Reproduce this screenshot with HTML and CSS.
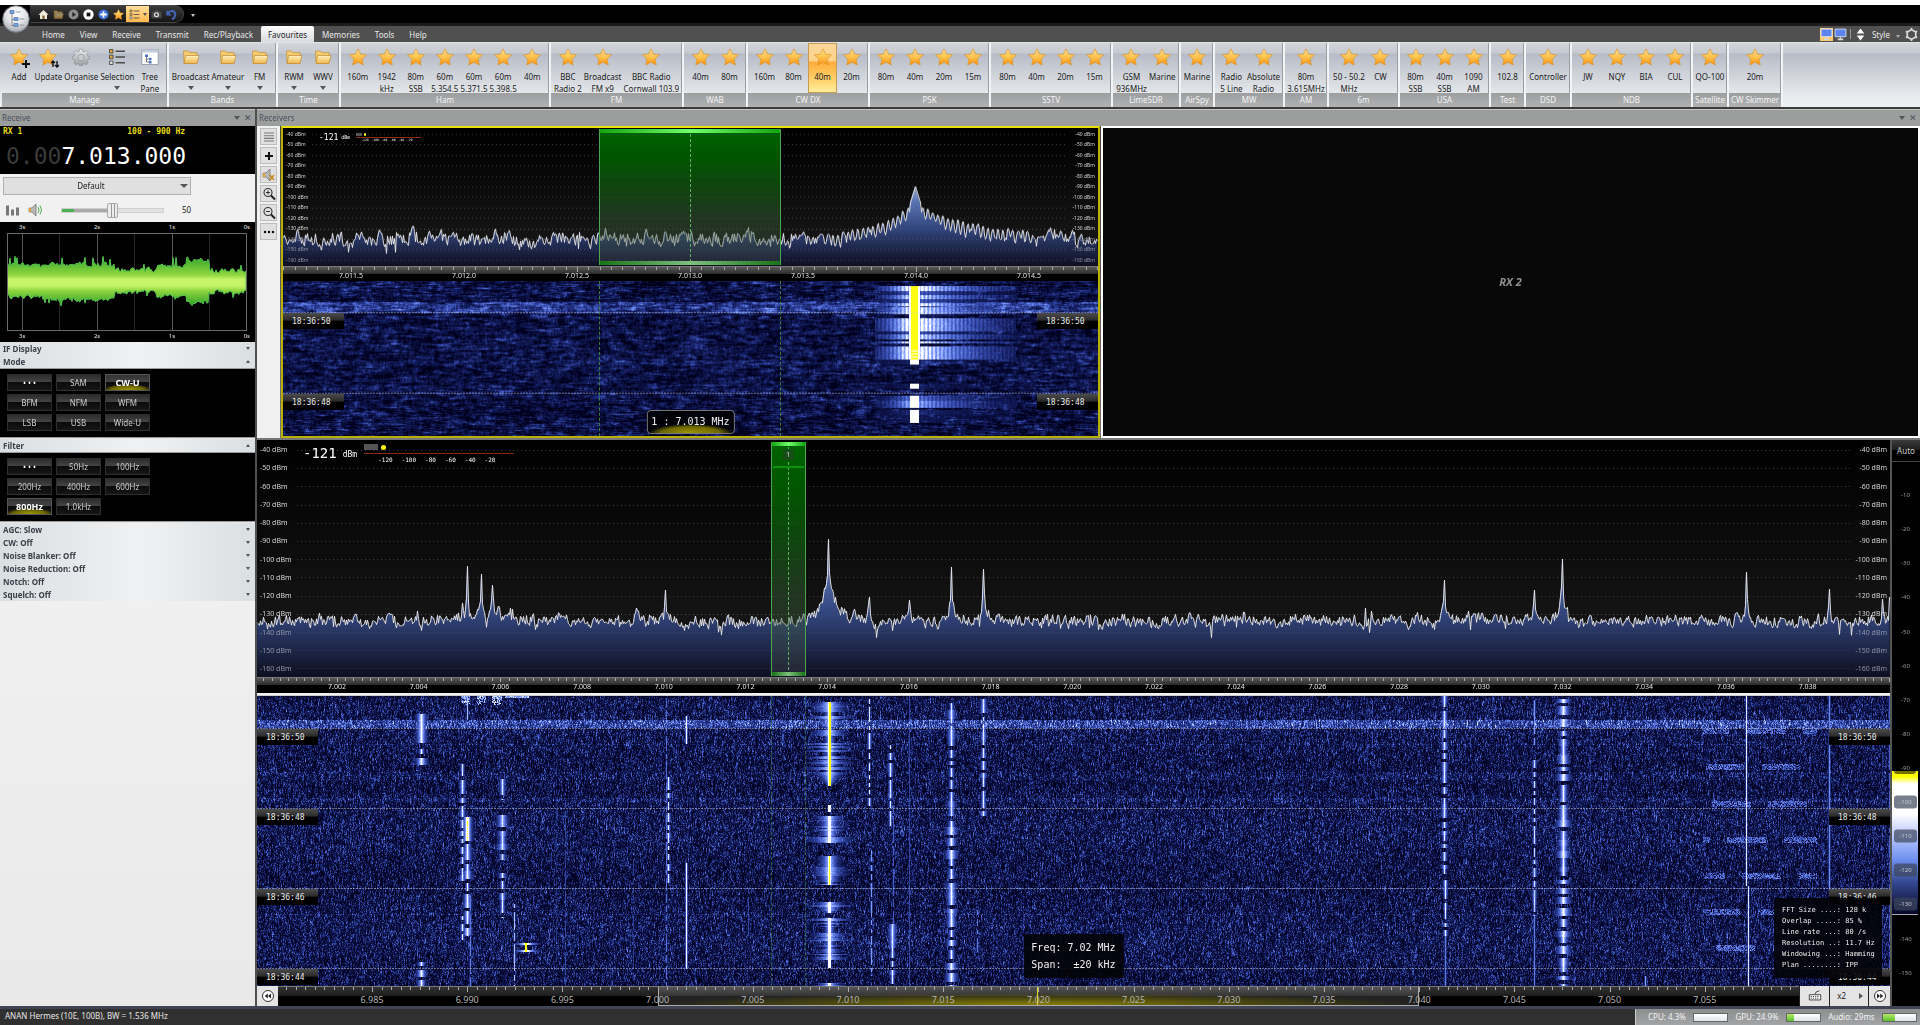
FILE: index.html
```html
<!DOCTYPE html>
<html lang="en">
<head>
<meta charset="utf-8">
<title>Receiver console</title>
<link rel="stylesheet" href="styles.css">
</head>
<body>
<svg class="defs" aria-hidden="true">
  <defs>
    <linearGradient id="gStar" x1="0" y1="0" x2="0" y2="1"><stop offset="0" stop-color="#ffdf95"/><stop offset=".5" stop-color="#ffc34f"/><stop offset="1" stop-color="#f79412"/></linearGradient>
    <linearGradient id="gFold" x1="0" y1="0" x2="0" y2="1"><stop offset="0" stop-color="#fff0bd"/><stop offset="1" stop-color="#f0b64c"/></linearGradient>
    <radialGradient id="gOrb" cx=".5" cy=".3" r=".8"><stop offset="0" stop-color="#fff"/><stop offset=".5" stop-color="#dfe1e4"/><stop offset="1" stop-color="#8d9197"/></radialGradient>
    <linearGradient id="gGear" x1="0" y1="0" x2="0" y2="1"><stop offset="0" stop-color="#e8e8e8"/><stop offset="1" stop-color="#9b9da0"/></linearGradient>
    <symbol id="star" viewBox="0 0 18 18"><path d="M9 .8l2.6 5.3 5.9.8-4.3 4.1 1 6-5.2-2.8L3.8 17l1-6L.5 6.900l5.9-.8z" fill="url(#gStar)" stroke="#d98c24" stroke-width=".6" stroke-linejoin="round"/></symbol>
    <symbol id="folder" viewBox="0 0 18 18"><path d="M1.500 3h5l1.500 1.600h7V15h-13z" fill="#f5cc70" stroke="#c08a30" stroke-width=".7"/><path d="M3.600 7.500H17L15 15.500H2z" fill="url(#gFold)" stroke="#c08a30" stroke-width=".7"/></symbol>
    <symbol id="gear" viewBox="0 0 18 18"><path d="M7.600 1h2.800l.5 2.200 1.300.6L14.200 2.600l2 2-1.200 2 .6 1.300 2 .6v2.600l-2.100.6-.6 1.300 1.200 2-2 2-2-1.200-1.300.6-.4 1.400H7.600l-.5-1.600-1.300-.5-2 1.200-2-2 1.200-2-.6-1.300L.4 11V8.400l2-.5.6-1.300-1.200-2 2-2 2 1.200 1.300-.6z" fill="url(#gGear)" stroke="#8a8c8f" stroke-width=".6"/><circle cx="9" cy="9.500" r="3.200" fill="#c9ccd2" stroke="#8a8c8f" stroke-width=".6"/></symbol>
    <symbol id="list" viewBox="0 0 18 18"><g fill="#e5a53a" stroke="#4a4a4a" stroke-width=".9"><path d="M1.500 1.500h3.500v3.500h-3.500zM1.500 7.200h3.500v3.500h-3.500z"/><path fill="#ddd" d="M1.500 13h3.500v3.500h-3.500z"/></g><path d="M7.500 3.300h9.500M7.500 9h9.500M7.500 14.800h9.500" stroke="#4a4a4a" stroke-width="1.400"/></symbol>
    <symbol id="tree" viewBox="0 0 18 18"><path d="M.8 1.500h16.400v15H.8z" fill="#fff" stroke="#8a93a3" stroke-width=".8"/><path d="M.8 1.500h16.400v3H.8z" fill="#c3ccdb"/><path d="M5.500 8v6M5.500 11h3M5.500 14h3" stroke="#556" stroke-width=".8"/><path d="M4 6.500h3v2.500h-3zM8 9.700h2.500v2.500h-2.500zM8 13h2.500v2.500h-2.500z" fill="#4a76c4"/></symbol>
    <symbol id="home" viewBox="0 0 10 10"><path d="M5 .8L.4 5.200h1.400v4h6.400v-4h1.400z" fill="#f3ecd8"/><path d="M4 6h2v3.200H4z" fill="#7a5a32"/></symbol>
    <symbol id="speaker" viewBox="0 0 14 14"><path d="M1 5h3l4-4v12l-4-4H1z" fill="#b9b9b9" stroke="#6a6a6a" stroke-width=".7"/><path d="M1 5h2v4H1z" fill="#e2a13a"/></symbol>
    <symbol id="lens" viewBox="0 0 14 14"><circle cx="6" cy="5.500" r="4" fill="none" stroke="#333" stroke-width="1.100"/><path d="M9 8.500l4 4" stroke="#222" stroke-width="2"/><path d="M4 5.500h4" stroke="#333" stroke-width="1"/></symbol>
    <symbol id="screen" viewBox="0 0 12 12"><path d="M1 1h10v7H1z" fill="#5c83ee" stroke="#dfe6fa" stroke-width=".8"/><path d="M3.500 10.500h5M6 8.500v2" stroke="#d8d8d8" stroke-width="1.400"/></symbol>
    <symbol id="skip" viewBox="0 0 14 14"><circle cx="7" cy="7" r="5.500" fill="#fff" stroke="#333" stroke-width="1"/><path d="M4 4.500L7 7 4 9.500zM7.200 4.500l3 2.500-3 2.500z" fill="#222"/></symbol>
  </defs>
</svg>

<header>
  <div class="titlebar">
    <svg class="orb" viewBox="0 0 28 28"><circle cx="14" cy="14" r="13.300" fill="url(#gOrb)" stroke="#70757c"/><path d="M10 8v13M10 14.500h4M10 20.500h4" stroke="#777" stroke-width=".8" fill="none"/><g fill="#7aa2dd" stroke="#3d66a8" stroke-width=".6"><path d="M8 5.500h4v3H8zM12 12.500h4v3h-4zM12 18.500h4v3h-4z"/></g><path d="M13.500 7h5M17.500 14h5M17.500 20h4" stroke="#8a8f97" stroke-width=".9"/></svg>
    <div class="qat">
      <button aria-label="Home"><svg><use href="#home"/></svg></button>
      <button aria-label="Open" class="dim"><svg><use href="#folder"/></svg></button>
      <button aria-label="Play"><svg viewBox="0 0 10 10"><circle cx="5" cy="5" r="4.500" fill="#8d8d8d"/><path d="M4 2.800L7.200 5 4 7.200z" fill="#222"/></svg></button>
      <button aria-label="Stop"><svg viewBox="0 0 10 10"><circle cx="5" cy="5" r="4.700" fill="#fff"/><path d="M3.300 3.300h3.400v3.400H3.300z" fill="#111"/></svg></button>
      <button aria-label="Add"><svg viewBox="0 0 10 10"><circle cx="5" cy="5" r="4.600" fill="#3c6fd6"/><path d="M5 2v6M2 5h6" stroke="#fff" stroke-width="1.600"/></svg></button>
      <button aria-label="Favourites"><svg><use href="#star"/></svg></button>
      <button aria-label="List" class="on"><svg><use href="#list"/></svg><i class="tri"></i></button>
      <button aria-label="Camera"><svg viewBox="0 0 10 10"><path d="M.5 2.500h2.500l1-1.200h3l.8 1.200h1.700v6H.5z" fill="#4a4a4a"/><circle cx="5" cy="5.300" r="2.300" fill="#ddd"/><circle cx="5" cy="5.300" r="1.100" fill="#333"/></svg></button>
      <button aria-label="Undo"><svg viewBox="0 0 10 10"><path d="M1.800 3.800C4 .5 8.500 1.500 8.300 5.500 8.200 7.500 7 8.700 5.500 9.500" fill="none" stroke="#4365b5" stroke-width="1.900"/><path d="M.3.8v5h5z" fill="#4365b5"/></svg></button>
    </div>
    <button class="more" aria-label="Customise"><i class="tri"></i></button>
  </div>
  <nav class="tabs">
    <a href="#">Home</a><a href="#">View</a><a href="#">Receive</a><a href="#">Transmit</a><a href="#">Rec/Playback</a><a href="#" class="active">Favourites</a><a href="#">Memories</a><a href="#">Tools</a><a href="#">Help</a>
    <div class="tabtools">
      <button class="lit" aria-label="Single display"><svg><use href="#screen"/></svg></button>
      <button aria-label="Display"><svg><use href="#screen"/></svg></button>
      <i class="bar"></i>
      <button aria-label="Resize"><svg viewBox="0 0 12 12"><path d="M6 .5l3.500 4.500h-7zM6 11.500l3.500-4.500h-7z" fill="#fff"/></svg></button>
      <button class="style">Style <i class="tri"></i></button>
      <button aria-label="Settings"><svg viewBox="0 0 12 12"><path d="M6 1.500l3.900 2.200v4.600L6 10.500 2.100 8.300V3.700z" fill="none" stroke="#ddd" stroke-width="1.500"/><path d="M6 0v2M6 10v2M.8 3l1.700 1M9.500 8l1.700 1M.8 9l1.700-1M9.500 4l1.700-1" stroke="#ddd" stroke-width="1.500"/></svg></button>
    </div>
  </nav>
  <div class="ribbon">
    <section><div class="tools">
      <button><span class="ico"><svg><use href="#star"/></svg><svg class="badge" viewBox="0 0 8 8"><path d="M4 0v8M0 4h8" stroke="#111" stroke-width="2"/></svg></span>Add</button>
      <button><span class="ico"><svg><use href="#star"/></svg><svg class="badge" viewBox="0 0 8 8"><path d="M2 7V2M0 3l2-2 2 2M6 1v5M4 5l2 2 2-2" stroke="#111" stroke-width="1.400" fill="none"/></svg></span>Update</button>
      <button><svg><use href="#gear"/></svg>Organise</button>
      <button><svg><use href="#list"/></svg>Selection<i class="tri"></i></button>
      <button><svg><use href="#tree"/></svg>Tree<br>Pane</button>
    </div><h2>Manage</h2></section>
    <section><div class="tools">
      <button><svg><use href="#folder"/></svg>Broadcast<i class="tri"></i></button>
      <button><svg><use href="#folder"/></svg>Amateur<i class="tri"></i></button>
      <button><svg><use href="#folder"/></svg>FM<i class="tri"></i></button>
    </div><h2>Bands</h2></section>
    <section><div class="tools">
      <button><svg><use href="#folder"/></svg>RWM<i class="tri"></i></button>
      <button><svg><use href="#folder"/></svg>WWV<i class="tri"></i></button>
    </div><h2>Time</h2></section>
    <section><div class="tools">
      <button><svg><use href="#star"/></svg>160m</button>
      <button><svg><use href="#star"/></svg>1942<br>kHz</button>
      <button><svg><use href="#star"/></svg>80m<br>SSB</button>
      <button><svg><use href="#star"/></svg>60m<br>5.354.5</button>
      <button><svg><use href="#star"/></svg>60m<br>5.371.5</button>
      <button><svg><use href="#star"/></svg>60m<br>5.398.5</button>
      <button><svg><use href="#star"/></svg>40m</button>
    </div><h2>Ham</h2></section>
    <section><div class="tools">
      <button><svg><use href="#star"/></svg>BBC<br>Radio 2</button>
      <button><svg><use href="#star"/></svg>Broadcast<br>FM x9</button>
      <button><svg><use href="#star"/></svg>BBC Radio<br>Cornwall 103.9</button>
    </div><h2>FM</h2></section>
    <section><div class="tools">
      <button><svg><use href="#star"/></svg>40m</button>
      <button><svg><use href="#star"/></svg>80m</button>
    </div><h2>WAB</h2></section>
    <section><div class="tools">
      <button><svg><use href="#star"/></svg>160m</button>
      <button><svg><use href="#star"/></svg>80m</button>
      <button class="on"><svg><use href="#star"/></svg>40m</button>
      <button><svg><use href="#star"/></svg>20m</button>
    </div><h2>CW DX</h2></section>
    <section><div class="tools">
      <button><svg><use href="#star"/></svg>80m</button>
      <button><svg><use href="#star"/></svg>40m</button>
      <button><svg><use href="#star"/></svg>20m</button>
      <button><svg><use href="#star"/></svg>15m</button>
    </div><h2>PSK</h2></section>
    <section><div class="tools">
      <button><svg><use href="#star"/></svg>80m</button>
      <button><svg><use href="#star"/></svg>40m</button>
      <button><svg><use href="#star"/></svg>20m</button>
      <button><svg><use href="#star"/></svg>15m</button>
    </div><h2>SSTV</h2></section>
    <section><div class="tools">
      <button><svg><use href="#star"/></svg>GSM<br>936MHz</button>
      <button><svg><use href="#star"/></svg>Marine</button>
    </div><h2>LimeSDR</h2></section>
    <section><div class="tools">
      <button><svg><use href="#star"/></svg>Marine</button>
    </div><h2>AirSpy</h2></section>
    <section><div class="tools">
      <button><svg><use href="#star"/></svg>Radio<br>5 Line</button>
      <button><svg><use href="#star"/></svg>Absolute<br>Radio</button>
    </div><h2>MW</h2></section>
    <section><div class="tools">
      <button><svg><use href="#star"/></svg>80m<br>3.615MHz</button>
    </div><h2>AM</h2></section>
    <section><div class="tools">
      <button><svg><use href="#star"/></svg>50 - 50.2<br>MHz</button>
      <button><svg><use href="#star"/></svg>CW</button>
    </div><h2>6m</h2></section>
    <section><div class="tools">
      <button><svg><use href="#star"/></svg>80m<br>SSB</button>
      <button><svg><use href="#star"/></svg>40m<br>SSB</button>
      <button><svg><use href="#star"/></svg>1090<br>AM</button>
    </div><h2>USA</h2></section>
    <section><div class="tools">
      <button><svg><use href="#star"/></svg>102.8</button>
    </div><h2>Test</h2></section>
    <section><div class="tools">
      <button><svg><use href="#star"/></svg>Controller</button>
    </div><h2>DSD</h2></section>
    <section><div class="tools">
      <button><svg><use href="#star"/></svg>JW</button>
      <button><svg><use href="#star"/></svg>NQY</button>
      <button><svg><use href="#star"/></svg>BIA</button>
      <button><svg><use href="#star"/></svg>CUL</button>
    </div><h2>NDB</h2></section>
    <section><div class="tools">
      <button><svg><use href="#star"/></svg>QO-100</button>
    </div><h2>Satellite</h2></section>
    <section><div class="tools">
      <button><svg><use href="#star"/></svg>20m</button>
    </div><h2>CW Skimmer</h2></section>
  </div>
</header>

<main>
  <aside>
    <div class="dock"><span>Receive</span><i class="tri"></i><button aria-label="Close">✕</button></div>
    <div class="readout">
      <div class="rx"><b>RX 1</b><b>100 - 900 Hz</b></div>
      <div class="freq"><span>0.00</span>7.013.000</div>
    </div>
    <div class="audio">
      <label class="pick"><select aria-label="Profile"><option>Default</option></select></label>
      <div class="volume">
        <svg viewBox="0 0 13 11"><path d="M0 1h3v10H0zM5 5h3v6H5zM10 3h3v8h-3z" fill="#777"/></svg>
        <svg viewBox="0 0 14 14"><use href="#speaker"/><path d="M10 4q2 3 0 6M12 2.500q3 4.500 0 9" stroke="#4caf50" fill="none"/></svg>
        <input type="range" min="0" max="100" value="50" aria-label="Volume">
        <output>50</output>
      </div>
    </div>
    <div class="scope">
      <div class="secs"><span>3s</span><span>2s</span><span>1s</span><span>0s</span></div>
      <canvas id="wave" width="240" height="98"></canvas>
      <div class="secs"><span>3s</span><span>2s</span><span>1s</span><span>0s</span></div>
    </div>
    <button class="acc">IF Display<i class="tri"></i></button>
    <button class="acc">Mode<i class="tri up"></i></button>
    <div class="keys">
      <button class="dots">• • •</button><button>SAM</button><button class="on">CW-U</button>
      <button>BFM</button><button>NFM</button><button>WFM</button>
      <button>LSB</button><button>USB</button><button>Wide-U</button>
    </div>
    <button class="acc">Filter<i class="tri up"></i></button>
    <div class="keys">
      <button class="dots">• • •</button><button>50Hz</button><button>100Hz</button>
      <button>200Hz</button><button>400Hz</button><button>600Hz</button>
      <button class="on">800Hz</button><button>1.0kHz</button>
    </div>
    <button class="acc">AGC: Slow<i class="tri"></i></button>
    <button class="acc">CW: Off<i class="tri"></i></button>
    <button class="acc">Noise Blanker: Off<i class="tri"></i></button>
    <button class="acc">Noise Reduction: Off<i class="tri"></i></button>
    <button class="acc">Notch: Off<i class="tri"></i></button>
    <button class="acc">Squelch: Off<i class="tri"></i></button>
  </aside>

  <div class="stage">
    <div class="dock"><span>Receivers</span><i class="tri"></i><button aria-label="Close">✕</button></div>
    <div class="receivers">
      <div class="strip">
        <button aria-label="Menu"><svg viewBox="0 0 14 14"><path d="M2 3h10M2 5.700h10M2 8.400h10M2 11h10" stroke="#777" stroke-width="1.100"/></svg></button>
        <button aria-label="Add receiver"><svg viewBox="0 0 14 14"><path d="M7 3v8M3 7h8" stroke="#111" stroke-width="2"/></svg></button>
        <button aria-label="Mute"><svg viewBox="0 0 14 14"><use href="#speaker"/><path d="M8 7l4 5M12 7l-4 5" stroke="#c98a1c" stroke-width="1.500"/></svg></button>
        <button aria-label="Zoom in"><svg viewBox="0 0 14 14"><use href="#lens"/><path d="M6 3.500v4" stroke="#333"/></svg></button>
        <button aria-label="Zoom out"><svg viewBox="0 0 14 14"><use href="#lens"/></svg></button>
        <button aria-label="More"><svg viewBox="0 0 14 14"><path d="M3 7h.01M7 7h.01M11 7h.01" stroke="#111" stroke-width="2.500" stroke-linecap="round"/></svg></button>
      </div>
      <div class="view small">
        <div class="spectrum">
          <canvas id="spec1" width="815" height="137"></canvas>
          <div class="dbm"></div><div class="dbm right"></div>
          <div class="meter"><b>-121</b><small>dBm</small><div class="smeter"><span>-120</span><span>-100</span><span>-80</span><span>-60</span><span>-40</span><span>-20</span></div></div>
          <div class="passband"></div>
        </div>
        <div class="ruler" id="ruler1"><canvas width="815" height="5"></canvas></div>
        <div class="fall">
          <canvas id="fall1" width="815" height="154"></canvas>
          <div class="edges"></div>
          <span class="tag">1 : 7.013 MHz</span>
        </div>
      </div>
      <div class="view idle">RX 2</div>
    </div>
    <div class="wide">
      <div class="view big">
        <div class="spectrum">
          <canvas id="spec2" width="1633" height="237"></canvas>
          <div class="dbm"></div><div class="dbm right"></div>
          <div class="meter"><b>-121</b><small>dBm</small><div class="smeter"><span>-120</span><span>-100</span><span>-80</span><span>-60</span><span>-40</span><span>-20</span></div></div>
          <div class="passband"><em>1</em></div>
        </div>
        <div class="ruler" id="ruler2"><canvas width="1633" height="4"></canvas></div>
        <div class="splitter"></div>
        <div class="fall">
          <canvas id="fall2" width="1633" height="290"></canvas>
          <div class="edges"></div>
          <div class="info"><div>Freq: 7.02 MHz</div><div>Span:&nbsp; ±20 kHz</div></div>
          <pre class="fft">FFT Size ....: 128 k
Overlap .....: 85 %
Line rate ...: 80 /s
Resolution ..: 11.7 Hz
Windowing ...: Hamming
Plan ........: IPP</pre>
        </div>
        <div class="navbar">
          <button aria-label="Back"><svg class="flip"><use href="#skip"/></svg></button>
          <div class="ruler" id="ruler3"><i class="window"></i><canvas width="1521" height="5"></canvas></div>
          <button aria-label="Keyboard" class="kb"><svg viewBox="0 0 16 14"><path d="M8 5q0-3 5-4" fill="none" stroke="#333"/><path d="M1.500 5.500h13v6h-13z" fill="#fff" stroke="#333"/><path d="M3 7.500h10M3 9.500h10" stroke="#333" stroke-dasharray="1.500 1"/></svg></button>
          <button class="x2">x2<i class="tri side"></i></button>
          <button aria-label="Forward"><svg><use href="#skip"/></svg></button>
        </div>
      </div>
      <div class="levels"><button>Auto</button><div class="scale" id="scale"><i class="ramp"></i></div></div>
    </div>
  </div>
</main>

<footer>
  <span>ANAN Hermes (10E, 100B), BW = 1.536 MHz</span>
  <div class="load">
    <label for="cpu">CPU: 4.3%</label><progress id="cpu" max="100" value="0"></progress>
    <label for="gpu">GPU: 24.9%</label><progress id="gpu" max="100" value="22"></progress>
    <label for="aud">Audio: 29ms</label><progress id="aud" max="100" value="36"></progress>
  </div>
</footer>
<script src="app.js"></script>
</body>
</html>
```
FILE: styles.css
```css
* { box-sizing: border-box; }
body { margin: 0; height: 100vh; display: flex; flex-direction: column; background: #505050; font: 8px/12px "Noto Sans", "Open Sans", sans-serif; color: #222; overflow: hidden; }
button, select, input { font: inherit; color: inherit; margin: 0; padding: 0; border: 0; background: none; }
button { cursor: pointer; }
svg, canvas { display: block; }
.defs { position: absolute; width: 0; height: 0; }
.tri { display: inline-block; border: 3px solid transparent; border-top: 4px solid #555; border-bottom: 0; }
.tri.up { transform: rotate(180deg); }
.tri.side { transform: rotate(-90deg); }

/* title bar and tabs */
.titlebar { display: flex; align-items: center; height: 26px; border-top: 5px solid #fff; border-bottom: 3px solid #1c1c1c; background: #000; padding-left: 2px; }
.orb { width: 28px; height: 28px; flex: none; position: relative; top: 5px; z-index: 2; }
.qat { display: flex; height: 18px; align-items: center; padding: 0 4px 0 6px; background: linear-gradient(#3a3a3a, #161616); border: 1px solid #444; border-left: 0; border-radius: 0 9px 9px 0; }
.qat button { width: 15px; height: 16px; display: flex; align-items: center; justify-content: center; }
.qat svg { width: 11px; height: 11px; flex: none; }
.qat .dim { opacity: .55; }
.qat .on { width: 23px; background: linear-gradient(#ffdf9a, #ffb84d); gap: 3px; }
.qat .on .tri { border-width: 3px 2px 0; }
.more { margin-left: 7px; }
.more .tri { border-top-color: #ccc; border-width: 3px 2px 0; }
.tabs { display: flex; align-items: stretch; gap: 1px; height: 16px; background: #505050; padding-left: 35px; color: #e8e8e8; line-height: 17px; }
.tabs a { color: inherit; text-decoration: none; padding: 0 7px; }
.tabs .active { background: linear-gradient(#fdfdfd, #d8dbe0); color: #222; border-radius: 2px 2px 0 0; }
.tabtools { margin-left: auto; display: flex; align-items: center; gap: 1px; padding-right: 2px; }
.tabtools svg { width: 13px; height: 13px; }
.tabtools .lit { background: #ffc868; }
.tabtools .bar { width: 1px; height: 10px; background: #999; margin: 0 2px; }
.tabtools .style { padding: 0 4px; }
.tabtools .tri { border-width: 3px 2px 0; border-top-color: #aaa; margin-left: 4px; }

/* ribbon */
.ribbon { height: 65px; display: grid; grid-template-rows: 64px; grid-template-columns: 167px 109px 63px 210px 133px 64px 122px 121px 122px 68px 34px 70px 44px 71px 91px 35px 46px 121px 36px 54px; padding-left: 2px; background: linear-gradient(#d2d5da, #c6cad1 10px, #b6bcc7 11px, #c6cad2 24px, #e6eaed 52px, #eef1f4); border-top: 1px solid #e0e3e6; }
.ribbon section { display: flex; flex-direction: column; min-height: 0; border-right: 2px solid #f2f4f6; box-shadow: inset -1px 0 #9a9ea3; overflow: hidden; }
.tools { flex: 1; min-height: 0; display: flex; justify-content: center; }
.tools button { flex: none; min-width: 29px; padding: 5px 1px 0; display: grid; align-content: start; justify-items: center; text-align: center; white-space: nowrap; }
.tools svg { width: 18px; height: 18px; margin-bottom: 5px; }
.tools .tri { margin-top: 3px; }
.tools .on { background: linear-gradient(#f8d79c, #ffd38a 36%, #ffac3c 38%, #ffc95e 65%, #fff0a0); box-shadow: inset 0 0 0 1px #c79a55; }
.ribbon h2 { flex: none; margin: 0; height: 14px; background: linear-gradient(#9b9d9f, #b0b2b4); color: #f4f4f4; font: inherit; line-height: 14px; text-align: center; white-space: nowrap; }
.ico { position: relative; }
.ico .badge { position: absolute; right: -2px; bottom: 3px; width: 8px; height: 8px; margin: 0; }

/* body */
main { flex: 1; min-height: 0; display: grid; grid-template-columns: 255px 1fr; gap: 2px; border-top: 2px solid #3c3c3c; }
.dock { display: flex; align-items: center; height: 17px; padding: 0 3px 0 2px; background: #9c9e9e; border-top: 1px solid #c5c5c5; color: #4a505c; gap: 4px; flex: none; }
.dock span { flex: 1; }
.dock button { font-size: 9px; }
aside { display: flex; flex-direction: column; background: linear-gradient(#f0f0f0 55%, #e9e9e9); min-height: 0; }
.readout { background: #000; height: 48px; flex: none; }
.rx { display: flex; gap: 105px; padding-left: 3px; color: #e6dc14; font: bold 8px/12px "DejaVu Sans Mono", monospace; white-space: nowrap; }
.freq { padding-left: 6px; color: #fff; font: 23px/36px "DejaVu Sans Mono", monospace; }
.freq span { color: #3b3b3b; }
.audio { height: 48px; flex: none; padding: 3px 3px 0; background: #f1f1f1; }
.pick { display: block; position: relative; width: 188px; height: 18px; }
.pick select { width: 100%; height: 100%; appearance: none; background: #e0e0e0; border: 1px solid #b0b0b0; text-align: center; text-align-last: center; padding-right: 12px; }
.pick::after { content: ""; position: absolute; right: 3px; top: 7px; border: 4px solid transparent; border-top-color: #555; border-bottom: 0; }
.volume { display: flex; align-items: center; height: 30px; padding-left: 3px; }
.volume svg { width: 13px; height: 12px; margin-right: 9px; }
.volume svg + svg { width: 14px; height: 14px; margin-right: 20px; }
.volume input { width: 101px; height: 14px; appearance: none; }
.volume input::-webkit-slider-runnable-track { height: 3px; background: linear-gradient(90deg, #4caf50 12%, #a9a9a9 12% 50%, #e2e2e2 50%); box-shadow: 0 0 0 1px #d0d0d0; }
.volume input::-webkit-slider-thumb { appearance: none; width: 11px; height: 15px; margin-top: -6px; background: linear-gradient(90deg, transparent 3px, #999 3px 4px, transparent 4px 6px, #999 6px 7px, transparent 7px), #ececec; border: 1px solid #aaa; border-radius: 2px; }
.volume output { margin-left: 19px; }
.scope { background: #000; height: 120px; flex: none; padding: 0 8px 0 7px; color: #e8e8e8; font-size: 6px; line-height: 11px; }
.secs { display: flex; justify-content: space-between; padding-left: 12px; margin-right: -3px; height: 11px; }
.acc { display: flex; align-items: center; justify-content: space-between; height: 13px; flex: none; padding: 0 5px 0 3px; font-weight: bold; color: #3a3f48; background: linear-gradient(90deg, #dadfe2, #f0f1f2 55%, #dadfe2); }
.acc .tri { border-width: 3px 2px 0; }
.keys { display: grid; grid-template-columns: repeat(3, 45px); grid-auto-rows: 17px; gap: 3px 4px; height: 70px; flex: none; padding: 5px 7px; background: #000; border: solid #9a9a9a; border-width: 1px 0; }
.keys + .acc { border-top: 1px solid #e8e8e8; height: 14px; }
.keys button { background: linear-gradient(#2c2c2c, #444 46%, #0c0c0c 50%, #161616); border: 1px solid #2e2e2e; color: #ccc; line-height: 14px; }
.keys .on { color: #fff; font-size: 9px; font-weight: bold; border-color: #555; background: radial-gradient(ellipse 24px 6px at 50% 100%, #a09800, #6c6600 70%, transparent), linear-gradient(#333, #444 46%, #0c0c0c 50%, #161616); }
.keys .dots { font-size: 8px; color: #fff; }
.stage { display: flex; flex-direction: column; min-width: 0; min-height: 0; background: #505050; }
.receivers { flex: 312 1 0; min-height: 0; display: grid; grid-template-columns: 23px 1fr 1fr; column-gap: 1px; padding: 0 0 2px; background: linear-gradient(#444, #777); }
.strip { background: #f0f0f0; display: flex; flex-direction: column; gap: 2px; padding: 2px 3px; }
.strip button { width: 17px; height: 17px; background: #e0e0e0; border: 1px solid #bcbcbc; display: grid; place-items: center; }
.strip svg { width: 14px; height: 14px; }
.view { display: flex; flex-direction: column; min-width: 0; min-height: 0; background: #000; }
.small { border: 2px solid #b9b000; border-top-color: #e8e010; }
.idle { border: 2px solid #fff; background: #080808; color: #8f8f8f; align-items: center; justify-content: center; font: italic bold 11px/12px "Noto Sans", sans-serif; }
.wide { flex: 566 1 0; min-height: 0; display: grid; grid-template-columns: 1fr 30px; }
.spectrum, .fall { position: relative; min-height: 0; overflow: hidden; }
.spectrum > canvas, .fall > canvas { position: absolute; width: 100%; height: 100%; }
.small .spectrum { flex: 137 1 0; }
.small .fall { flex: 154 1 0; }
.big .spectrum { flex: 237 1 0; }
.big .fall { flex: 290 1 0; }
.dbm { position: absolute; left: 3px; top: 0; bottom: 0; display: flex; flex-direction: column; justify-content: space-between; color: #d8d4d0; font-size: 7px; line-height: 10px; padding: 5px 0 3px; }
.dbm.right { left: auto; right: 3px; text-align: right; }
.small .dbm { font-size: 5px; line-height: 8px; padding: 2px 0; }
.dbm span:nth-last-child(-n+3) { color: #8d92a6; }
.meter { position: absolute; left: 46px; top: 3px; display: flex; align-items: flex-start; color: #fff; font-family: "DejaVu Sans Mono", monospace; }
.meter b { font-weight: normal; font-size: 14px; line-height: 21px; }
.meter small { font-size: 8px; line-height: 21px; margin: 1px 7px 0 6px; }
.smeter { position: relative; width: 150px; margin-top: 10px; padding: 2px 14px 0; border-top: 1px solid #8a2c12; display: flex; gap: 9px; font-size: 6px; line-height: 8px; }
.smeter::before { content: ""; position: absolute; left: 0; top: -10px; width: 14px; height: 6px; background: #555; }
.smeter::after { content: ""; position: absolute; left: 17px; top: -9px; width: 5px; height: 5px; border-radius: 3px; background: #ff0; }
.small .meter { left: 36px; top: 3px; }
.small .meter b { font-size: 8px; line-height: 13px; }
.small .meter small { font-size: 5px; line-height: 13px; margin: 0 6px 0 3px; }
.small .smeter { width: 65px; margin-top: 6px; padding: 0 5px; gap: 3px; font-size: 3px; line-height: 5px; }
.small .smeter::before { top: -5px; width: 6px; height: 3px; }
.small .smeter::after { top: -5px; left: 8px; width: 2px; height: 3px; }
.passband { position: absolute; left: 38.800%; width: 22.300%; top: 1px; bottom: 1px; border: solid #4aa84a; border-width: 0 1px; background: repeating-linear-gradient(#5fb05f 0 3px, transparent 3px 5px) center / 1px 100% no-repeat, linear-gradient(rgba(0, 110, 0, .9), rgba(0, 100, 0, .85) 20%, rgba(50, 90, 50, .5) 65%, rgba(90, 90, 90, .25)); }
.passband::before, .passband::after { content: ""; position: absolute; left: 0; right: 0; top: 0; height: 4px; background: linear-gradient(90deg, #12a512, #6dff6d 50%, #12a512); }
.passband::after { top: auto; bottom: 0; background: linear-gradient(90deg, #187518, #7cc07c 50%, #187518); }
.big .passband { left: 31.500%; width: 2.100%; top: 2px; }
.big .passband::before { box-shadow: 0 23px 0 -1px #0d900d; }
.passband em { display: block; width: 11px; height: 11px; margin: 7px auto 0; background: #174d17; color: #d9c9d9; text-align: center; font: 7px/11px "Noto Sans", sans-serif; }
.ruler { position: relative; height: 15px; flex: none; background: linear-gradient(#5a5a5a, #2a2a2a 7px, #000 7px); border-top: 1px solid #777; color: #e4e4e4; font-size: 7px; }
.ruler canvas { width: 100%; }
.ruler span { position: absolute; bottom: -1px; transform: translateX(-50%); line-height: 12px; white-space: nowrap; }
.splitter { height: 4px; flex: none; background: linear-gradient(#000 1px, #f4f0f0 1px 3px, #ccc 3px); }
.time { position: absolute; left: 0; width: 61px; height: 16px; padding-left: 9px; background: linear-gradient(#4c4c4c, #2a2a2a 45%, #000 50%); color: #e8e8e8; font: 8px/17px "DejaVu Sans Mono", monospace; }
.time.right { left: auto; right: 0; }
.edges { position: absolute; inset: 0 38.900% 0 38.800%; border: dashed #3f7f3f; border-width: 0 1px; }
.big .edges { inset: 0 66.400% 0 31.500%; opacity: .7; }
.tag { position: absolute; left: 50%; bottom: 2px; transform: translateX(-50%); height: 24px; padding: 0 4px; border: 1px solid #777; border-radius: 4px; color: #eee; white-space: nowrap; font: 10px/22px "DejaVu Sans Mono", monospace; background: radial-gradient(ellipse 42px 9px at 50% 100%, #a09800, #6c6600 70%, transparent), rgba(0, 0, 0, .85); }
.info { position: absolute; left: 50%; bottom: 8px; transform: translateX(-50%); padding: 5px 8px; background: rgba(3, 3, 8, .92); border-radius: 3px; color: #f0f0f0; white-space: nowrap; font: 10px/17px "DejaVu Sans Mono", monospace; }
.fft { position: absolute; right: 8px; bottom: 8px; margin: 0; padding: 7px 8px; background: rgba(3, 3, 8, .9); border-radius: 3px; color: #eee; font: 7px/11px "DejaVu Sans Mono", monospace; width: 108px; z-index: 1; }
.navbar { height: 20px; flex: none; display: flex; background: #222; }
.navbar button { width: 21px; background: #e4e4e4; display: grid; place-items: center; margin-left: 1px; }
.navbar button:first-child { margin: 0; }
.navbar .kb { width: 29px; }
.navbar .x2 { width: 38px; display: flex; align-items: center; justify-content: flex-end; gap: 12px; padding-right: 4px; }
.navbar svg { width: 14px; height: 14px; }
.navbar .flip { transform: scaleX(-1); }
.navbar .ruler { flex: 1; height: 20px; background: linear-gradient(#333, #1c1c1c 9px, #000 9px); color: #b4b4b4; font-size: 9px; }
.navbar .ruler span { bottom: 0; }
.navbar .ruler canvas { position: relative; }
.window { position: absolute; left: 25%; width: 50%; top: 0; bottom: 0; border: solid #aaa; border-width: 0 1px 1px; background: linear-gradient(90deg, transparent calc(50% - 1px), #e6dc14 calc(50% - 1px) 50%, transparent 50%), radial-gradient(ellipse 50% 12px at 50% 100%, #8a8200, rgba(110, 104, 0, .5) 60%, transparent), linear-gradient(#555, #333 9px, #222 9px); }
.levels { display: flex; flex-direction: column; background: #000; border-left: 2px solid #555; }
.levels button { height: 22px; flex: none; color: #ccc; background: linear-gradient(#3a3a3a, #1c1c1c 50%, #000 50%); border-bottom: 1px solid #444; }
.scale { position: relative; flex: 1; color: #9a9a9a; font-size: 6px; line-height: 12px; }
.scale span { position: absolute; left: 2px; right: 3px; transform: translateY(-50%); text-align: center; border-radius: 3px; }
.scale .chip { background: rgba(60, 70, 90, .7); line-height: 13px; color: #c4c8d0; }
.ramp { position: absolute; left: 0; right: 2px; top: 56.800%; height: 26.400%; border-bottom: 1px solid #aaa; background: linear-gradient(#ff0 4%, #fff 9% 30%, #c6d2ff 42%, #6f90f0 62%, #33478f 78%, #060628); }
.ramp::before { content: ""; display: block; height: 3px; margin: 0 2px; background: #777000; border-radius: 0 0 3px 3px; }

/* status bar */
footer { display: flex; height: 19px; flex: none; align-items: stretch; background: #303030; border-top: 3px solid #414553; color: #e6e6e6; line-height: 14px; }
footer > span { flex: 1; padding-left: 5px; }
.load { width: 285px; padding: 0 3px 0 12px; display: flex; align-items: center; justify-content: space-between; background: linear-gradient(#8b8d8f, #a2a4a6); color: #f4f4f4; border-left: 1px solid #ccc; }
progress { appearance: none; width: 35px; height: 9px; border: 1px solid #666; }
progress::-webkit-progress-bar { background: linear-gradient(#fff, #dfe3e8); }
progress::-webkit-progress-value { background: linear-gradient(#b6e86a, #5cc22c); }
```
FILE: app.js
```js
// Seeded generator, so that every load draws the same trace.
let seed = 7013;
function rnd() {
  seed = (seed * 1664525 + 1013904223) >>> 0;
  return seed / 4294967296;
}
const $ = (s) => document.querySelector(s);

// dBm axes
document.querySelectorAll('.dbm').forEach((axis) => {
  for (let v = -40; v >= -160; v -= 10) {
    const s = document.createElement('span');
    s.textContent = v + ' dBm';
    axis.append(s);
  }
});

// Frequency rulers: first label position, spacing, and ticks per label
function ruler(id, texts, first, step, div) {
  const el = $(id), c = el.querySelector('canvas'), g = c.getContext('2d');
  texts.forEach((t, i) => {
    const s = document.createElement('span');
    s.textContent = t;
    s.style.left = ((first + i * step) / c.width * 100).toFixed(3) + '%';
    el.append(s);
  });
  g.fillStyle = '#aaa';
  const d = step / div;
  for (let k = -Math.floor(first / d); first + k * d < c.width; k++) {
    g.fillRect(Math.round(first + k * d), 0, 1, k % div ? 3 : 5);
  }
}
ruler('#ruler1', ['7.011.5', '7.012.0', '7.012.5', '7.013.0', '7.013.5', '7.014.0', '7.014.5'], 68, 113, 10);
const mhz = (from, step, n) => Array.from({ length: n }, (_, i) => (from + i * step).toFixed(3));
ruler('#ruler2', mhz(7.002, 0.002, 19), 80, 81.700, 10);
ruler('#ruler3', mhz(6.985, 0.005, 15), 94, 95.200, 10);

// Palette scale
for (let v = -10; v >= -150; v -= 10) {
  const s = document.createElement('span');
  s.textContent = v;
  if (v <= -100 && v >= -130) s.className = 'chip';
  s.style.top = ((33 + (-v - 10) * 3.405) / 543 * 100).toFixed(2) + '%';
  $('#scale').append(s);
}

// Time stamps on the waterfalls
function stamps(sel, height, list) {
  const box = $(sel);
  list.forEach(([y, t]) => ['time', 'time right'].forEach((cls) => {
    const s = document.createElement('span');
    s.className = cls;
    s.textContent = t;
    s.style.top = (y / height * 100).toFixed(3) + '%';
    box.querySelector('.edges').before(s);
  }));
}
stamps('.small .fall', 154, [[32, '18:36:50'], [112, '18:36:48']]);
stamps('.big .fall', 290, [[33, '18:36:50'], [113, '18:36:48'], [193, '18:36:46'], [273, '18:36:44']]);

// Spectrum trace
function spectrum(id, base, jitter, lift, gx0, gx1, gy, gstep) {
  const c = $(id), g = c.getContext('2d'), W = c.width, H = c.height;
  let bg = g.createLinearGradient(0, 0, 0, H);
  bg.addColorStop(0, '#000'); bg.addColorStop(.75, '#141414');
  g.fillStyle = bg; g.fillRect(0, 0, W, H);
  g.fillStyle = '#3c3c3c';
  for (let i = 0; i < 13; i++) for (let x = gx0; x < gx1; x += 4) g.fillRect(x, Math.round(gy + i * gstep), 1, 1);
  const ys = [];
  let slow = 0, v = 0;
  for (let x = 0; x < W; x++) {
    slow = slow * .85 + (rnd() - .5) * jitter * .3;
    v = v * .3 + (rnd() - .5) * jitter * 1.2;
    let y = base + slow + v;
    if (rnd() < .012) y += jitter * 1.1;
    ys.push(Math.min(y, lift(x, y)));
  }
  g.beginPath(); g.moveTo(0, H);
  ys.forEach((y, x) => g.lineTo(x, y));
  g.lineTo(W, H);
  bg = g.createLinearGradient(0, H * .4, 0, H);
  bg.addColorStop(0, '#a9b4cf'); bg.addColorStop(.22, '#5a74b4'); bg.addColorStop(.55, '#32457c'); bg.addColorStop(1, '#0e0f20');
  g.fillStyle = bg; g.fill();
  g.beginPath();
  ys.forEach((y, x) => g.lineTo(x + .5, y));
  g.strokeStyle = '#e4e4e8'; g.lineWidth = 1; g.stroke();
  g.fillStyle = 'rgba(150,160,190,.22)';
  for (let i = 9; i < 13; i++) for (let x = gx0; x < gx1; x += 4) g.fillRect(x, Math.round(gy + i * gstep), 1, 1);
}
spectrum('#spec1', 109, 11, (x, y) => {
  const d = Math.abs(x - 632), tau = x < 632 ? 38 : 62;
  if (d > 200) return 999;
  if (d < 6) return 58 + d * 3.200;
  const env = 73 + 35 * (1 - Math.exp(-d / tau));
  const comb = (.5 + .5 * Math.cos(d * 2 * Math.PI / 5)) * (9 + 6 * Math.min(1, d / 50));
  return env + comb + (y - 109) * .25 + (d > 110 ? (d - 110) * .2 : 0);
}, 29, 784, 6, 10.390);
const peaks = [[205, 163, 4], [210, 126, 2], [224, 134, 3], [235, 145, 4], [241, 166, 5], [253, 168, 2], [255, 169, 2], [160, 171, 2], [379, 168, 2], [408, 150, 2], [571, 99, 10], [612, 157, 2], [652, 160, 1],
  [694, 127, 4], [726, 129, 3], [1108, 168, 1], [1114, 171, 1], [1187, 140, 3], [1277, 150, 2], [1305, 119, 5], [1489, 132, 2], [1572, 149, 1], [1625, 159, 1], [1632, 157, 1]];
spectrum('#spec2', 181, 9, (x, y) => {
  let best = 999;
  peaks.forEach(([px, py, w]) => {
    const d = Math.abs(x - px);
    if (d > w * 3) return;
    const h = 181 - py;
    const v = y - h * (.5 * Math.exp(-d * 1.6) + .5 * Math.exp(-d / w * 1.2)) + (d === 0 ? 181 - y : 0);
    best = Math.min(best, v);
  });
  return best;
}, 40, 1593, 10, 18.200);

// Waterfall palette
const stops = [[0, 0, 0, 28], [.3, 20, 30, 96], [.55, 62, 86, 190], [.78, 130, 160, 255], [1, 255, 255, 255], [1.3, 255, 255, 255], [1.31, 255, 255, 20], [9, 255, 255, 20]];
function tint(v) {
  let i = 1;
  while (v > stops[i][0] && i < stops.length - 1) i++;
  const a = stops[i - 1], b = stops[i], t = (v - a[0]) / (b[0] - a[0]);
  return [1, 2, 3].map((k) => a[k] + (b[k] - a[k]) * t);
}
function paint(c, field) {
  const g = c.getContext('2d'), W = c.width, H = c.height, im = g.createImageData(W, H);
  for (let i = 0; i < W * H; i++) {
    const p = tint(Math.max(0, field[i]));
    im.data[i * 4] = p[0]; im.data[i * 4 + 1] = p[1]; im.data[i * 4 + 2] = p[2]; im.data[i * 4 + 3] = 255;
  }
  g.putImageData(im, 0, 0);
  return g;
}
function dotted(g, ys, W) {
  g.fillStyle = 'rgba(200,205,220,.5)';
  ys.forEach((y) => { for (let x = 0; x < W; x += 3) g.fillRect(x, y, 2, 1); });
}

// Zoomed waterfall: horizontal streaks and one keyed carrier
(function () {
  const c = $('#fall1'), W = c.width, H = c.height, f = new Float32Array(W * H);
  const prev = new Float32Array(W);
  for (let y = 0; y < H; y++) {
    const row = new Float32Array(W);
    let v = 0;
    for (let x = -20; x < W; x++) {
      v = v * .82 + (rnd() - .5) * .6;
      if (x >= 0) row[x] = v;
    }
    const band = y >= 21 && y < 32 ? .26 : y > 78 && y < 84 ? .06 : 0;
    for (let x = 0; x < W; x++) {
      prev[x] = prev[x] * .42 + row[x] * .8;
      f[y * W + x] = Math.max(0, .18 + prev[x] * .48 + band);
    }
  }
  const on = [[5, 10, 1], [10, 14, .55], [14, 18, .9], [18, 22, .55], [22, 25, 1], [26, 33, .95], [37, 50, 1], [50, 53, .5], [53, 58, .9], [60, 62, 1], [65, 78, 1], [78, 83, .3], [102, 107, .25], [114, 119, .6], [119, 126, .75], [128, 133, .35], [133, 141, .25]];
  for (let y = 5; y < 142; y++) {
    const seg = on.find((s) => y >= s[0] && y < s[1]);
    const core = y < 83 || seg;
    for (let x = 500; x < 800; x++) {
      const d = x - 631, a = Math.abs(d), side = d < 0 ? 30 : 78;
      let v = 0;
      if (core && y < 78 && a < 4) v = (y > 68 && y % 3 === 0) ? 1.1 : 2;
      else if (core && a < (y < 78 ? 6 : 5)) v = 1.150;
      if (seg) v = Math.max(v, seg[2] * (1.05 * Math.exp(-Math.max(0, a - 7) / side) * (.94 + .12 * Math.cos(a * 1.6)) + (rnd() - .5) * .12));
      const fade = a > side * 1.3 ? .45 : 0;
      if (v > .1 + fade) f[y * W + x] = Math.max(f[y * W + x], v - fade * .4);
    }
  }
  dotted(paint(c, f), [31, 111], W);
})();

// Wide waterfall
(function () {
  const c = $('#fall2'), W = c.width, H = c.height, f = new Float32Array(W * H);
  const col = new Float32Array(W);
  for (let y = 0; y < H; y++) {
    let band = .025 * Math.sin(y / 17);
    if (y >= 24 && y < 32) band = .24 + .08 * rnd();
    else if (y >= 76 && y < 84) band = .04;
    else if (y >= 102 && y < 106) band = .08;
    else if (y === 48 || y === 192 || y === 218) band = .1;
    for (let x = 0; x < W; x++) {
      const r = rnd();
      col[x] = col[x] * .42 + r * r * .58;
      f[y * W + x] = Math.max(0, col[x] * .8 - .05 + band);
    }
  }
  const add = (x, y, v) => { if (x >= 0 && x < W && y >= 0 && y < H) f[y * W + x] = Math.max(f[y * W + x], v); };
  // x, first row, last row, half-width, peak level, keyed
  const lines = [
    [164, 18, 47, 4, 1.1, 0], [164, 53, 69, 4, 1.1, 1], [164, 266, 290, 4, 1.1, 1],
    [205, 65, 187, 2.5, 1, 1], [205, 220, 244, 2.5, 1, 1], [210, 0, 24, .8, .9, 0], [210, 121, 145, 3, 1.4, 0], [210, 148, 240, 3, 1.1, 1], [213, 200, 290, 1, .7, 1],
    [245, 79, 104, 2, 1, 1], [245, 115, 164, 3.5, 1, 1], [245, 174, 222, 3, 1, 1], [257, 204, 290, 1, .9, 1],
    [299, 40, 280, 1, .4, 1], [376, 160, 290, 1, .45, 1],
    [308, 100, 290, 1, .5, 1], [409, 5, 290, 1, .65, 1], [411, 81, 189, 2, 1, 1], [429, 20, 48, 1, 1.2, 0], [429, 167, 273, 1, 1.2, 0], [491, 190, 240, 1, .5, 1],
    [612, 0, 113, 1.5, 1, 1], [614, 150, 280, 1.2, .8, 1], [633, 46, 130, 2, 1, 1], [636, 110, 228, 1, .6, 1], [635, 228, 290, 3, 1, 1], [652, 0, 290, 1, .5, 0],
    [694, 3, 120, 3, 1, 1], [694, 122, 290, 3.5, 1.1, 1], [726, 0, 120, 2.2, 1, 1], [720, 210, 260, 1, .7, 1], [766, 215, 290, 1, .4, 1],
    [1110, 0, 80, 1, .4, 1], [1115, 0, 60, 1, .5, 1],
    [1187, 0, 178, 2.5, 1, 1], [1188, 180, 240, 2, 1, 1], [1188, 240, 290, 1.2, .7, 0], [1277, 0, 50, 1, .8, 1], [1277, 60, 220, 2, .95, 1], [1277, 220, 290, 1, .7, 0],
    [1306, 0, 290, 4.5, 1.1, 1], [1333, 0, 290, 1, .35, 0], [1489, 0, 190, .8, 1, 0], [1491, 190, 290, .8, 1, 0], [1572, 0, 195, 1.2, .75, 0], [1625, 0, 290, 1, .45, 1], [1632, 0, 290, 1, .6, 1],
    [1388, 280, 290, 1, .8, 0]
  ];
  lines.forEach(([cx, y0, y1, w, lvl, keyed]) => {
    let run = 0, live = true, wide = 1;
    for (let y = y0; y < y1; y++) {
      if (keyed && run-- <= 0) {
        live = !live || rnd() > .6;
        run = live ? 2 + rnd() * 6 : 1 + rnd() * 2;
        wide = .5 + rnd() * .8;
      }
      if (!live) continue;
      for (let d = -8; d <= 8; d++) {
        const v = lvl * Math.exp(-Math.abs(d) / (w * wide) * .8) * (.9 + .1 * rnd());
        if (v > .25) add(cx + d, y, v);
      }
    }
  });
  // strong carrier with side bands
  [[6, 90], [109, 116], [120, 147], [160, 189], [206, 217], [222, 264], [264, 272], [287, 290]].forEach(([a, b], n) => {
    let side = 12;
    for (let y = a; y < b; y++) {
      if (rnd() < .45) side = [5, 9, 14, 19][Math.floor(rnd() * 4)];
      if (n === 0 && y > 78) side = (92 - y) * .8;
      if (n === 1 || n === 6) side = 2;
      for (let d = -24; d <= 24; d++) {
        const q = Math.abs(d);
        let v = .98 * Math.exp(-q / side) * (.9 + .15 * rnd());
        if (q < 2) v = (n === 0 && d > -1) || (n === 3 && d === 0) ? 2 : 1.1;
        if (v > .25) add(572 + d, y, v);
      }
    }
  });
  // short burst left of centre and bright patch at the top edge
  for (let y = 247; y < 256; y++) {
    add(268, y, 2); add(269, y, 2);
    if (y < 249 || y > 253) for (let d = -14; d < 15; d++) add(269 + d, y, 1.2 * Math.exp(-Math.abs(d) / 10));
  }
  for (let x = 200; x < 272; x++) for (let y = 0; y < 9; y++) {
    if (x < 248 ? (Math.sin(x / 2.500) > -.3 && rnd() > y / 12) : y < 2) add(x, y, .6 + rnd() * .4);
  }
  // repeating slanted dashes
  [35, 71, 108, 144, 180, 216, 252].forEach((y0) => {
    for (let x = 1446; x < 1560; x++) {
      const gate = Math.sin(x / 9 + y0) > -.55;
      if (gate) for (let y = y0 - 3; y < y0 + 3; y++) if (rnd() > .25) add(x, y, .4 + rnd() * .35);
    }
  });
  dotted(paint(c, f), [32, 112, 192, 272], W);
})();

// Audio envelope
(function () {
  const c = $('#wave'), g = c.getContext('2d'), W = c.width, H = c.height;
  g.fillStyle = '#000'; g.fillRect(0, 0, W, H);
  [[15, '#555'], [90, '#555'], [165, '#555'], [52, '#2a2a2a'], [127, '#2a2a2a'], [202, '#2a2a2a']].forEach(([x, s]) => { g.fillStyle = s; g.fillRect(x, 0, 1, H); });
  const up = [], dn = [];
  let n = 0, m = 0;
  for (let x = 0; x < W; x++) {
    const a = x < 108 ? 14 : x < 150 ? 9 : x < 180 ? 13 : x < 202 ? 19 : 9;
    n = n * .5 + rnd() * 4; m = m * .5 + rnd() * 4;
    up.push(50 - a - n - (rnd() < .05 ? 7 : 0));
    dn.push(46 + a + m + (x > 35 && x < 108 ? 3 : 0) + (rnd() < .05 ? 4 : 0));
  }
  g.beginPath();
  up.forEach((y, x) => g.lineTo(x, y));
  for (let x = W - 1; x >= 0; x--) g.lineTo(x, dn[x]);
  g.closePath();
  const k = g.createLinearGradient(0, 25, 0, 73);
  k.addColorStop(0, '#3aa82c'); k.addColorStop(.35, '#8fd63f'); k.addColorStop(.45, '#c6f56a'); k.addColorStop(.58, '#c6f56a'); k.addColorStop(.68, '#8fd63f'); k.addColorStop(1, '#2e9e28');
  g.fillStyle = k; g.fill();
  g.strokeStyle = '#52c552'; g.stroke();
  g.strokeStyle = '#6a6a6a'; g.strokeRect(.5, .5, W - 1, H - 1);
})();
```
